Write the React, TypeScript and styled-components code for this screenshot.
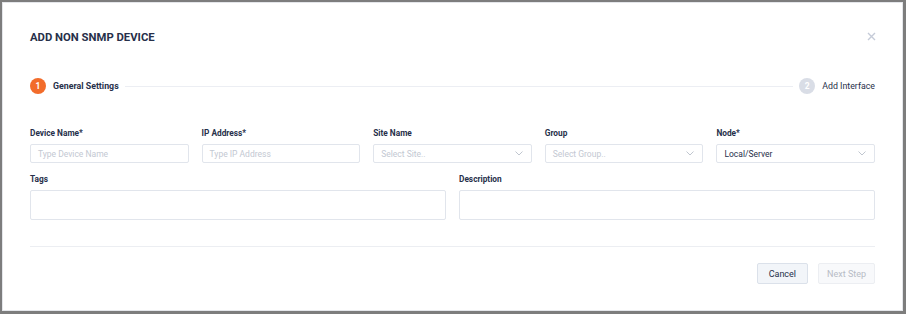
import React from "react";
import styled, { createGlobalStyle } from "styled-components";

const Global = createGlobalStyle`
  html, body { margin: 0; padding: 0; }
  body {
    background: #7d7d7d;
    font-family: Roboto, "Liberation Sans", Arial, sans-serif;
  }
  * { box-sizing: border-box; }
`;

const Backdrop = styled.div`
  width: 906px;
  height: 314px;
  padding: 2px 3px 3px 2px;
`;

const Modal = styled.div`
  width: 901px;
  height: 309px;
  background: #ffffff;
  border: 1px solid #e4e6ea;
  padding: 0 27px 0 27px;
  display: flex;
  flex-direction: column;
`;

const Header = styled.div`
  height: 66px;
  display: flex;
  align-items: center;
  justify-content: space-between;
  padding-top: 2px;
`;

const Title = styled.h2`
  margin: 0;
  font-size: 11.3px;
  font-weight: 700;
  color: #27304a;
`;

const Close = styled.button`
  border: none;
  background: none;
  padding: 0;
  margin-right: -2px;
  margin-top: -1px;
  width: 12px;
  height: 12px;
  display: flex;
  align-items: center;
  justify-content: center;
  cursor: pointer;
`;

const Stepper = styled.div`
  height: 36px;
  margin-top: -1px;
  display: flex;
  align-items: center;
`;

const StepCircle = styled.span<{ $active?: boolean }>`
  width: 16px;
  height: 16px;
  border-radius: 50%;
  background: ${(p) => (p.$active ? "#f26c2b" : "#d9dde6")};
  color: #ffffff;
  font-size: 8.5px;
  font-weight: 700;
  display: flex;
  align-items: center;
  justify-content: center;
  flex-shrink: 0;
`;

const StepLabel = styled.span<{ $active?: boolean }>`
  margin-left: 7px;
  font-size: 8.8px;
  font-weight: ${(p) => (p.$active ? 700 : 400)};
  color: #27304a;
  white-space: nowrap;
`;

const StepLine = styled.div`
  flex: 1;
  height: 1px;
  background: #eceef3;
  margin: 0 6px 0 6px;
`;

const Form = styled.div`
  padding-top: 24px;
  display: flex;
  flex-direction: column;
  gap: 11px;
`;

const Row = styled.div<{ $cols: number }>`
  display: grid;
  grid-template-columns: repeat(${(p) => p.$cols}, 1fr);
  column-gap: 13px;
`;

const Field = styled.div`
  display: flex;
  flex-direction: column;
`;

const Label = styled.label`
  font-size: 8.3px;
  font-weight: 700;
  color: #27304a;
  line-height: 11px;
  margin-bottom: 5px;
`;

const Input = styled.div<{ $tall?: boolean }>`
  height: ${(p) => (p.$tall ? "30px" : "19px")};
  border: 1px solid #e1e5ec;
  border-radius: 2px;
  display: flex;
  align-items: center;
  justify-content: space-between;
  padding: 0 8px 0 7px;
  font-size: 8.5px;
  background: #fff;
`;

const Placeholder = styled.span`
  color: #c3c8d2;
`;

const Value = styled.span`
  color: #27304a;
`;

const Divider = styled.div`
  height: 1px;
  background: #eceef2;
  margin-top: 26px;
`;

const Footer = styled.div`
  display: flex;
  justify-content: flex-end;
  gap: 10px;
  padding-top: 16px;
`;

const Button = styled.button<{ $disabled?: boolean }>`
  height: 21px;
  padding: 0 ${(p) => (p.$disabled ? "8px" : "11px")};
  border-radius: 2px;
  border: 1px solid ${(p) => (p.$disabled ? "#eceef2" : "#dbe1ea")};
  background: ${(p) => (p.$disabled ? "#f8f9fb" : "#f2f5f9")};
  color: ${(p) => (p.$disabled ? "#b7bcc6" : "#27304a")};
  font-family: inherit;
  font-size: 9px;
  cursor: pointer;
`;

const Chevron = () => (
  <svg width="8" height="5" viewBox="0 0 8 5" fill="none">
    <path d="M0.5 0.5 L4 4 L7.5 0.5" stroke="#b9bfca" strokeWidth="0.9" />
  </svg>
);

export default function App() {
  return (
    <>
      <Global />
      <Backdrop>
        <Modal>
          <Header>
            <Title>ADD NON SNMP DEVICE</Title>
            <Close aria-label="close">
              <svg width="9" height="9" viewBox="0 0 9 9">
                <path d="M1 1 L8 8 M8 1 L1 8" stroke="#c5cbd8" strokeWidth="1.4" />
              </svg>
            </Close>
          </Header>
          <Stepper>
            <StepCircle $active>1</StepCircle>
            <StepLabel $active>General Settings</StepLabel>
            <StepLine />
            <StepCircle>2</StepCircle>
            <StepLabel>Add Interface</StepLabel>
          </Stepper>
          <Form>
            <Row $cols={5}>
              <Field>
                <Label>Device Name*</Label>
                <Input><Placeholder>Type Device Name</Placeholder></Input>
              </Field>
              <Field>
                <Label>IP Address*</Label>
                <Input><Placeholder>Type IP Address</Placeholder></Input>
              </Field>
              <Field>
                <Label>Site Name</Label>
                <Input><Placeholder>Select Site..</Placeholder><Chevron /></Input>
              </Field>
              <Field>
                <Label>Group</Label>
                <Input><Placeholder>Select Group..</Placeholder><Chevron /></Input>
              </Field>
              <Field>
                <Label>Node*</Label>
                <Input><Value>Local/Server</Value><Chevron /></Input>
              </Field>
            </Row>
            <Row $cols={2}>
              <Field>
                <Label>Tags</Label>
                <Input $tall />
              </Field>
              <Field>
                <Label>Description</Label>
                <Input $tall />
              </Field>
            </Row>
          </Form>
          <Divider />
          <Footer>
            <Button>Cancel</Button>
            <Button $disabled>Next Step</Button>
          </Footer>
        </Modal>
      </Backdrop>
    </>
  );
}
